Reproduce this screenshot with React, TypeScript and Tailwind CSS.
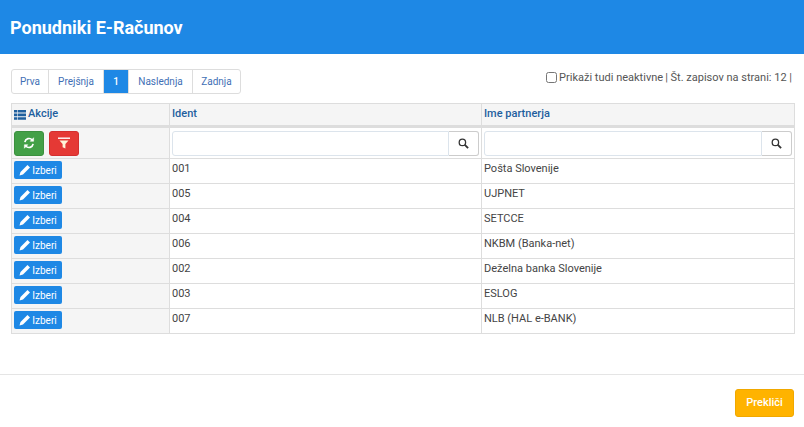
const rows = [
  { id: "001", name: "Pošta Slovenije" },
  { id: "005", name: "UJPNET" },
  { id: "004", name: "SETCCE" },
  { id: "006", name: "NKBM (Banka-net)" },
  { id: "002", name: "Deželna banka Slovenije" },
  { id: "003", name: "ESLOG" },
  { id: "007", name: "NLB (HAL e-BANK)" },
]

const pages = [
  { label: "Prva", cls: "w-[38px] rounded-l-[3px]" },
  { label: "Prejšnja", cls: "w-[56px]" },
  { label: "1", cls: "w-[26px] bg-[#1e88e5] border-[#1e88e5] text-white font-medium" },
  { label: "Naslednja", cls: "w-[65px]" },
  { label: "Zadnja", cls: "w-[49px] rounded-r-[3px]" },
]

const SearchIcon = () => (
  <svg width="11" height="11" viewBox="0 0 12 12" fill="none" stroke="#333" strokeWidth="1.4">
    <circle cx="4.8" cy="4.8" r="3.5" />
    <path d="M7.5 7.5L11 11" strokeWidth="2" />
  </svg>
)

const PencilIcon = () => (
  <svg width="12" height="12" viewBox="0 0 12 12" fill="white">
    <path d="M0.5 11.5L1.5 8L8.5 1L11 3.5L4 10.5Z" />
  </svg>
)

const ListIcon = () => (
  <svg width="12" height="10" viewBox="0 0 12 10" fill="#1f5f9e">
    <path d="M0 0h3v2.6H0zM3.6 0H12v2.6H3.6zM0 3.6h3v2.6H0zM3.6 3.6H12v2.6H3.6zM0 7.2h3v2.6H0zM3.6 7.2H12v2.6H3.6z" />
  </svg>
)

const RefreshIcon = () => (
  <svg width="12" height="12" viewBox="0 0 13 13" fill="none" stroke="white" strokeWidth="1.8">
    <path d="M2 5.5A4.6 4.6 0 0 1 10 3.2" />
    <path d="M11 7.5A4.6 4.6 0 0 1 3 9.8" />
    <path d="M11.5 0.8V4.6H7.8Z" fill="white" strokeWidth="0.6" />
    <path d="M1.5 12.2V8.4H5.2Z" fill="white" strokeWidth="0.6" />
  </svg>
)

const FilterIcon = () => (
  <svg width="12" height="12" viewBox="0 0 12 12" fill="white">
    <path d="M0 0.5h12v1.4H0z" />
    <path d="M1.5 3.4h9L7.4 7V11.5L4.6 10.2V7Z" fill="#fff3d6" />
  </svg>
)

const SearchBox = () => (
  <div className="flex h-[25px]">
    <input className="min-w-0 grow border border-[#dce4ec] rounded-l-[3px] bg-white outline-none" />
    <button className="w-[30px] shrink-0 flex items-center justify-center bg-white border border-l-0 border-[#ccc] rounded-r-[3px]">
      <SearchIcon />
    </button>
  </div>
)

export default function App() {
  return (
    <div className="w-[804px] h-[427px] bg-white overflow-hidden font-['Roboto',sans-serif] text-[11px] text-[#444]">
      <div className="h-[54px] bg-[#1e88e5] flex items-center px-[10px]">
        <h1 className="text-[18px] font-bold text-white">Ponudniki E-Računov</h1>
      </div>

      <div className="h-[320px] px-[11px]">
        <div className="flex justify-between items-start pt-[15px] pb-[9px]">
          <ul className="flex h-[25px] text-[10px] text-[#3f6fb5]">
            {pages.map(p => (
              <li
                key={p.label}
                className={`flex items-center justify-center border border-[#ddd] -ml-px first:ml-0 ${p.cls}`}
              >
                {p.label}
              </li>
            ))}
          </ul>
          <div className="flex items-center text-[#555] pr-px pt-px">
            <input type="checkbox" className="w-[11px] h-[11px] mr-[2px] mb-[2px]" />
            <span>Prikaži tudi neaktivne</span>
            <span className="ml-[2px]">| Št. zapisov na strani: 12 |</span>
          </div>
        </div>

        <table className="w-[783px] table-fixed border-collapse">
          <colgroup>
            <col className="w-[158px]" />
            <col className="w-[312px]" />
            <col className="w-[313px]" />
          </colgroup>
          <thead>
            <tr className="h-[23px] bg-[#f5f5f5] text-[#1f5f9e] text-left">
              <th className="border border-[#ddd] border-b-[3px] px-[2px] font-medium">
                <span className="flex items-center gap-[2px]"><ListIcon />Akcije</span>
              </th>
              <th className="border border-[#ddd] border-b-[3px] px-[2px] font-medium">Ident</th>
              <th className="border border-[#ddd] border-b-[3px] px-[2px] font-medium">Ime partnerja</th>
            </tr>
          </thead>
          <tbody>
            <tr className="h-[32px]">
              <td className="border border-[#ddd] bg-[#f5f5f5] px-[2px]">
                <div className="flex gap-[5px]">
                  <button className="w-[30px] h-[25px] flex items-center justify-center rounded-[3px] bg-[#43a047] border border-[#3c903f]"><RefreshIcon /></button>
                  <button className="w-[30px] h-[25px] flex items-center justify-center rounded-[3px] bg-[#e53935] border border-[#d32f2f]"><FilterIcon /></button>
                </div>
              </td>
              <td className="border border-[#ddd] px-[2px]"><SearchBox /></td>
              <td className="border border-[#ddd] px-[2px]"><SearchBox /></td>
            </tr>
            {rows.map(r => (
              <tr key={r.id} className="h-[25px]">
                <td className="border border-[#ddd] bg-[#f5f5f5] px-[2px] align-top pt-[2px]">
                  <button className="h-[18px] w-[48px] flex items-center justify-center gap-[1px] rounded-[2px] bg-[#1e88e5] text-white text-[10px]">
                    <PencilIcon />Izberi
                  </button>
                </td>
                <td className="border border-[#ddd] px-[2px] align-top pt-[2px]">{r.id}</td>
                <td className="border border-[#ddd] px-[2px] align-top pt-[2px]">{r.name}</td>
              </tr>
            ))}
          </tbody>
        </table>
      </div>

      <div className="border-t border-[#e5e5e5] flex justify-end pt-[14px] pr-[10px]">
        <button className="w-[59px] h-[28px] rounded-[3px] bg-[#ffb300] border border-[#f0a800] text-white text-[11px] font-medium">Prekliči</button>
      </div>
    </div>
  )
}
